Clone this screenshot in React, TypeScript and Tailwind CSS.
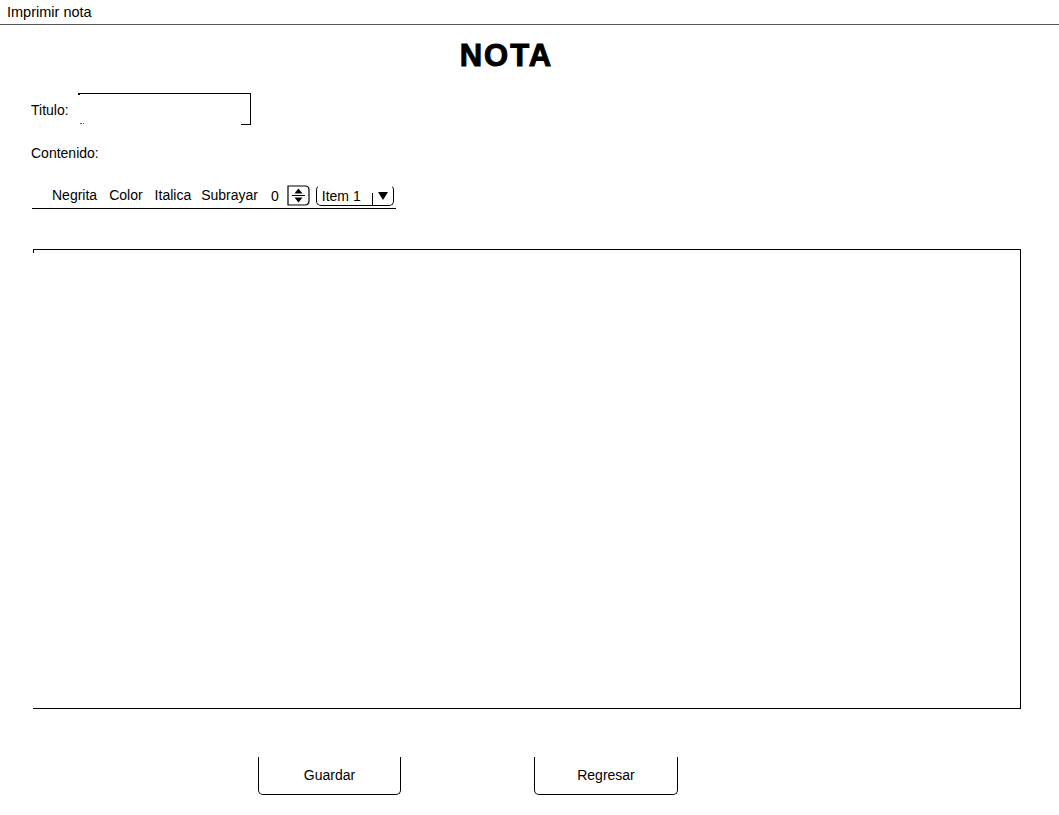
function Spinner() {
  return (
    <svg width="23" height="21" viewBox="0 0 23 21" className="block">
      <path d="M1 1 H18 Q22 1 22 5 V16 Q22 20 18 20 H1 Z" fill="none" stroke="#000" strokeWidth="1.2" />
      <line x1="5" y1="10.5" x2="18" y2="10.5" stroke="#000" strokeWidth="1" />
      <path d="M7.5 8.5 L11.5 3.5 L15.5 8.5 Z" fill="#000" />
      <path d="M7.5 12.5 L11.5 17.5 L15.5 12.5 Z" fill="#000" />
    </svg>
  );
}

function Combo() {
  return (
    <div className="flex h-[21px] w-[78px] items-center rounded-[5px] border border-black border-t-transparent">
      <span className="flex-1 pl-[5px] leading-[16px]">Item 1</span>
      <span className="mr-[3px] h-[12px] self-end border-l border-black" />
      <svg width="14" height="14" viewBox="0 0 14 14" className="mr-[3px] block">
        <path d="M2 3 L12 3 L7 11 Z" fill="#000" />
      </svg>
    </div>
  );
}

function Boton({ label }: { label: string }) {
  return (
    <button className="flex h-[38px] w-full items-center justify-center rounded-b-[5px] border-x border-b border-black bg-white text-[14px] text-black">
      {label}
    </button>
  );
}

export default function App() {
  return (
    <div className="h-[815px] w-[1059px] bg-white font-['Liberation_Sans',Arial,sans-serif] text-[14px] text-black">
      <div className="h-[25px] border-b border-[#555] pl-[7px] text-[14.5px] leading-[24px]">Imprimir nota</div>

      <h1 className="mt-[16px] flex justify-center pr-[46px] text-[31px] font-bold leading-[30px] tracking-[2px] [-webkit-text-stroke:1px_black]">
        NOTA
      </h1>

      <div className="mt-[22px] flex items-center pl-[31px]">
        <span className="pt-[2px]">Titulo:</span>
        <div className="relative ml-[9px] h-[32px] w-[173px] border-t border-r border-black">
          <span className="absolute -top-[1px] left-0 h-[2px] w-[2px] bg-black" />
          <span className="absolute bottom-0 left-[2px] h-[2px] w-[4px] border-t border-dotted border-[#555]" />
          <span className="absolute bottom-0 right-0 w-[9px] border-b border-black" />
        </div>
      </div>

      <div className="mt-[20px] pl-[31px] leading-[16px]">Contenido:</div>

      <div className="ml-[32px] mt-[22px] flex h-[26px] w-[364px] items-center border-b border-black pl-[20px]">
        <span className="mr-[12px]">Negrita</span>
        <span className="mr-[12px]">Color</span>
        <span className="mr-[10px]">Italica</span>
        <span className="mr-[13px]">Subrayar</span>
        <span className="mr-[8px] pt-[2px]">0</span>
        <Spinner />
        <span className="ml-[6px]">
          <Combo />
        </span>
      </div>

      <div className="relative ml-[33px] mt-[40px] h-[460px] w-[988px] border-y border-r border-black">
        <span className="absolute -top-[1px] left-0 h-[4px] w-[1px] bg-black" />
      </div>

      <div className="mt-[48px] flex pl-[258px]">
        <div className="w-[143px]">
          <Boton label="Guardar" />
        </div>
        <div className="ml-[133px] w-[144px]">
          <Boton label="Regresar" />
        </div>
      </div>
    </div>
  );
}
